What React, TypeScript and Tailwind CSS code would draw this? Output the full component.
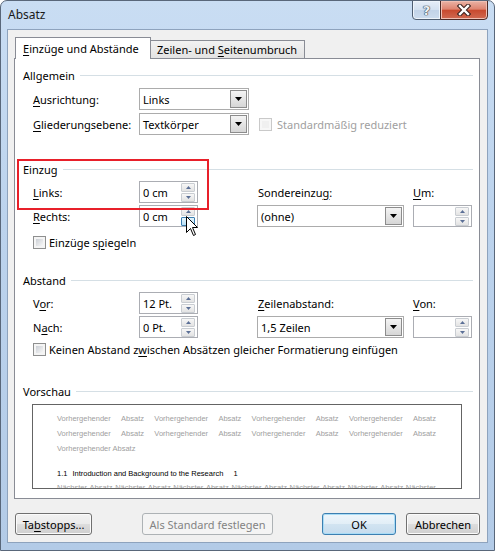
import React from "react";

type Kids = { children?: React.ReactNode };

// Underlined access-key letter
const U = ({ children }: Kids) => (
  <span className="underline decoration-1 underline-offset-[2px]">{children}</span>
);

function Tri({ up, color = "#000", w = 7, h = 4 }: { up?: boolean; color?: string; w?: number; h?: number }) {
  return (
    <svg width={w} height={h} viewBox={`0 0 ${w} ${h}`} className="block">
      <path d={up ? `M0 ${h} L${w / 2} 0 L${w} ${h} Z` : `M0 0 L${w} 0 L${w / 2} ${h} Z`} fill={color} />
    </svg>
  );
}

function SpinButton({ up, hot }: { up?: boolean; hot?: boolean }) {
  return (
    <div
      className={`flex h-[9px] w-[14px] items-center justify-center rounded-[1px] border ${
        hot
          ? "border-[#3c7fb1] bg-gradient-to-b from-[#e5f4fc] to-[#b7e0f7]"
          : "border-[#c9cdd2] bg-gradient-to-b from-[#f7f7f7] to-[#e3e3e3]"
      }`}
    >
      <Tri up={up} color="#5b6f96" w={5} h={3} />
    </div>
  );
}

function Spinner({ value, hot }: { value?: string; hot?: boolean }) {
  return (
    <div className="flex h-[22px] w-[59px] shrink-0 items-center border border-[#abadb3] bg-white">
      <span className="flex-1 pl-[3px]">{value}</span>
      <div className="mr-[2px] flex flex-col gap-px">
        <SpinButton up />
        <SpinButton hot={hot} />
      </div>
    </div>
  );
}

function Dropdown({ value, w }: { value: string; w: string }) {
  return (
    <div className={`flex h-[22px] ${w} shrink-0 items-center border border-[#acacac] bg-white`}>
      <span className="flex-1 pl-[3px]">{value}</span>
      <div className="mr-px flex h-[18px] w-[17px] items-center justify-center border border-[#8c8c8c] bg-gradient-to-b from-[#f4f4f4] to-[#d6d6d6]">
        <Tri />
      </div>
    </div>
  );
}

function Check({ disabled }: { disabled?: boolean }) {
  return (
    <div
      className={`h-[13px] w-[13px] shrink-0 border p-[2px] ${
        disabled ? "border-[#c9c9c9] bg-[#f7f7f7]" : "border-[#8e8f8f] bg-[#f4f4f4]"
      }`}
    >
      <div
        className={`h-full w-full ${
          disabled ? "bg-[#f0f0f0]" : "bg-gradient-to-br from-[#cbcfd5] to-[#f7f7f7]"
        }`}
      />
    </div>
  );
}

function Group({ title, className = "" }: { title: string; className?: string }) {
  return (
    <div className={`flex h-[16px] items-center pl-[8px] pr-[6px] ${className}`}>
      <span>{title}</span>
      <div className="ml-[5px] h-px flex-1 bg-[#d5dfe5]" />
    </div>
  );
}

function Button({
  children,
  w,
  def,
  disabled,
  className = "",
}: Kids & { w: string; def?: boolean; disabled?: boolean; className?: string }) {
  const look = disabled
    ? "border-[#adb2b5] bg-[#f4f4f4] text-[#838383]"
    : def
      ? "border-[#3c7fb1] bg-[linear-gradient(#eef6fb_0%,#e2eef7_50%,#d2e4f1_50%,#c6dcee_100%)] shadow-[inset_0_0_0_1px_#a9dcf6]"
      : "border-[#707070] bg-[linear-gradient(#f2f2f2_0%,#ebebeb_50%,#dddddd_50%,#cfcfcf_100%)] shadow-[inset_0_0_0_1px_#fbfbfb]";
  return (
    <div className={`flex h-[22px] ${w} items-center justify-center rounded-[3px] border ${look} ${className}`}>
      {children}
    </div>
  );
}

const gray = "text-[#a0a0a0]";

function PreviewLine({ words }: { words: string[] }) {
  return (
    <div className={`flex h-[15px] w-[379px] items-center justify-between ${gray}`}>
      {words.map((w, i) => (
        <span key={i}>{w}</span>
      ))}
    </div>
  );
}

export default function App() {
  const prev = Array.from({ length: 4 }).flatMap(() => ["Vorhergehender", "Absatz"]);
  const next = [
    "Nächster", "Absatz", "Nächster", "Absatz", "Nächster", "Absatz", "Nächster", "Absatz",
    "Nächster", "Absatz", "Nächster", "Absatz", "Nächster",
  ];

  return (
    <div className="flex h-[551px] w-[495px] flex-col overflow-hidden rounded-t-[7px] border border-[#59677a] bg-[linear-gradient(180deg,#c9ddf3_0%,#bcd3ed_40%,#b3cbe7_100%)] font-['Noto_Sans',sans-serif] text-[11px] leading-[15px] text-black">
      {/* title bar */}
      <div className="flex h-[28px] shrink-0 items-start">
        <span className="mt-[6px] pl-[7px] text-[12px] text-[#1a1a1a]">Absatz</span>
        <div className="-mt-px ml-auto mr-[6px] flex">
          <div className="flex h-[20px] w-[29px] items-center justify-center rounded-bl-[4px] border border-[#4f5e72] bg-[linear-gradient(#e6eef8_0%,#d3e0f0_50%,#c2d3e8_51%,#cddcee_100%)] shadow-[inset_0_0_0_1px_#eef4fb]">
            <span className="font-['DejaVu_Sans',sans-serif] text-[13px] font-bold leading-none text-[#eef1f5] [text-shadow:0_0_1px_#2f3b4a,0_0_1px_#2f3b4a,0_0_1px_#2f3b4a]">
              ?
            </span>
          </div>
          <div className="-ml-px flex h-[20px] w-[48px] items-center justify-center rounded-br-[4px] border border-[#4d2a26] bg-[linear-gradient(#eab3a6_0%,#de8470_45%,#c84a2f_52%,#d06a52_100%)] shadow-[inset_0_0_0_1px_#f0bfb3]">
            <svg width="14" height="12" viewBox="0 0 14 12" className="block">
              <path d="M3 2 L11 10 M11 2 L3 10" stroke="#3b2320" strokeWidth="4.5" strokeLinecap="square" />
              <path d="M3 2 L11 10 M11 2 L3 10" stroke="#ffffff" strokeWidth="2.4" strokeLinecap="square" />
            </svg>
          </div>
        </div>
      </div>

      {/* client area */}
      <div className="mx-[6px] mb-[7px] flex flex-1 flex-col border border-[#8ea3bd] bg-[#f0f0f0] px-[6px] pt-[7px]">
        {/* tabs */}
        <div className="flex h-[21px] items-end pl-px">
          <div className="relative z-10 -mb-px flex h-[22px] w-[136px] items-center border border-b-0 border-[#898c95] bg-white pl-[7px]">
            <span>
              <U>E</U>inzüge und Abstände
            </span>
          </div>
          <div className="-ml-px flex h-[18px] w-[155px] items-center border border-b-0 border-[#898c95] bg-gradient-to-b from-[#f2f2f2] to-[#e3e3e3] pl-[6px]">
            <span>
              Zeilen- und <U>S</U>eitenumbruch
            </span>
          </div>
        </div>

        {/* tab page */}
        <div className="relative w-[466px] border border-[#898c95] bg-white pb-[9px] pt-[8px]">
          <Group title="Allgemein" />
          <div className="mt-[5px] flex h-[22px] items-center pl-[18px]">
            <div className="w-[106px]">
              <U>A</U>usrichtung:
            </div>
            <Dropdown value="Links" w="w-[110px]" />
          </div>
          <div className="mt-[3px] flex h-[22px] items-center pl-[18px]">
            <div className="w-[106px]">
              <U>G</U>liederungsebene:
            </div>
            <Dropdown value="Textkörper" w="w-[110px]" />
            <div className="ml-[10px]">
              <Check disabled />
            </div>
            <span className="ml-[5px] text-[#a0a0a0]">Standardmäßig reduziert</span>
          </div>

          <Group title="Einzug" className="mt-[26px]" />
          <div className="mt-[4px] flex h-[22px] items-center pl-[18px]">
            <div className="w-[106px]">
              <U>L</U>inks:
            </div>
            <Spinner value="0 cm" />
            <div className="ml-[60px] w-[155px]">
              Sondereinzu<U>g</U>:
            </div>
            <div>
              <U>U</U>m:
            </div>
          </div>
          <div className="mt-[2px] flex h-[22px] items-center pl-[18px]">
            <div className="w-[106px]">
              <U>R</U>echts:
            </div>
            <Spinner value="0 cm" hot />
            <div className="ml-[59px]">
              <Dropdown value="(ohne)" w="w-[147px]" />
            </div>
            <div className="ml-[9px]">
              <Spinner />
            </div>
          </div>
          <div className="mt-[7px] flex h-[16px] items-center pl-[18px]">
            <Check />
            <span className="ml-[3px]">
              Einzüge s<U>p</U>iegeln
            </span>
          </div>

          <Group title="Abstand" className="mt-[22px]" />
          <div className="mt-[4px] flex h-[22px] items-center pl-[18px]">
            <div className="w-[106px]">
              V<U>o</U>r:
            </div>
            <Spinner value="12 Pt." />
            <div className="ml-[60px] w-[155px]">
              <U>Z</U>eilenabstand:
            </div>
            <div>
              <U>V</U>on:
            </div>
          </div>
          <div className="mt-[2px] flex h-[22px] items-center pl-[18px]">
            <div className="w-[106px]">
              N<U>a</U>ch:
            </div>
            <Spinner value="0 Pt." />
            <div className="ml-[59px]">
              <Dropdown value="1,5 Zeilen" w="w-[147px]" />
            </div>
            <div className="ml-[9px]">
              <Spinner />
            </div>
          </div>
          <div className="mt-[3px] flex h-[16px] items-center pl-[18px]">
            <Check />
            <span className="ml-[3px]">
              Keinen Abstand z<U>w</U>ischen Absätzen gleicher Formatierung einfügen
            </span>
          </div>

          <Group title="Vorschau" className="mt-[26px]" />
          <div className="mx-[17px] mt-[5px] h-[85px] overflow-hidden border border-[#646464] bg-white pl-[24px] pt-[6px] font-['Liberation_Sans',sans-serif] text-[7.5px] leading-[15px]">
            <PreviewLine words={prev} />
            <PreviewLine words={prev} />
            <div className={`h-[15px] ${gray}`}>Vorhergehender Absatz</div>
            <div className="mt-[10px] flex h-[15px] items-center text-black">
              <span>1.1</span>
              <span className="ml-[5px]">Introduction and Background to the Research</span>
              <span className="ml-[10px]">1</span>
            </div>
            <div className="-mt-px">
              <PreviewLine words={next} />
            </div>
          </div>

          {/* highlight frame drawn over the indent group */}
          <div className="pointer-events-none absolute left-[2px] top-[100px] h-[51px] w-[192px] border-2 border-[#e8202a]" />

          {/* mouse pointer over the spin button */}
          <svg
            width="13"
            height="21"
            viewBox="0 0 13 21"
            className="pointer-events-none absolute left-[171px] top-[157px]"
          >
            <path
              d="M0.5 0.5 L0.5 16.5 L4.5 12.5 L7.5 19.5 L9.5 18.5 L6.5 11.5 L11.5 11.5 Z"
              fill="#ffffff"
              stroke="#000000"
              strokeWidth="1"
              strokeLinejoin="miter"
            />
          </svg>
        </div>

        {/* buttons */}
        <div className="mt-[14px] flex items-center pl-px pr-px">
          <Button w="w-[77px]">
            <span>
              Ta<U>b</U>stopps...
            </span>
          </Button>
          <Button w="w-[131px]" disabled className="ml-[50px]">
            Als Standard festlegen
          </Button>
          <Button w="w-[74px]" def className="ml-auto">
            OK
          </Button>
          <Button w="w-[74px]" className="ml-[10px]">
            Abbrechen
          </Button>
        </div>
      </div>
    </div>
  );
}
